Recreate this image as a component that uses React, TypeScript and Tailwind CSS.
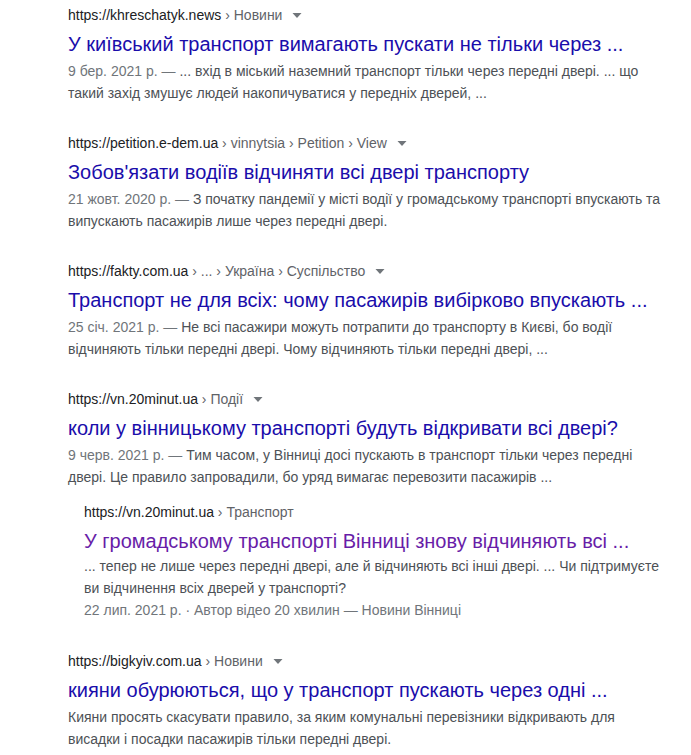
const font = { fontFamily: '"Liberation Sans", Arial, sans-serif' };

type Result = {
  site: string;
  crumbs: string;
  title: string;
  date?: string;
  snippet: string;
  arrow?: boolean;
  visited?: boolean;
  meta?: string;
};

const results: Result[] = [
  {
    site: "https://khreschatyk.news",
    crumbs: " › Новини",
    title: "У київський транспорт вимагають пускати не тільки через ...",
    date: "9 бер. 2021 р. — ",
    snippet:
      "... вхід в міський наземний транспорт тільки через передні двері. ... що такий захід змушує людей накопичуватися у передніх дверей, ...",
    arrow: true,
  },
  {
    site: "https://petition.e-dem.ua",
    crumbs: " › vinnytsia › Petition › View",
    title: "Зобов'язати водіїв відчиняти всі двері транспорту",
    date: "21 жовт. 2020 р. — ",
    snippet:
      "З початку пандемії у місті водії у громадському транспорті впускають та випускають пасажирів лише через передні двері.",
    arrow: true,
  },
  {
    site: "https://fakty.com.ua",
    crumbs: " › ... › Україна › Суспільство",
    title: "Транспорт не для всіх: чому пасажирів вибірково впускають ...",
    date: "25 січ. 2021 р. — ",
    snippet:
      "Не всі пасажири можуть потрапити до транспорту в Києві, бо водії відчиняють тільки передні двері. Чому відчиняють тільки передні двері, ...",
    arrow: true,
  },
  {
    site: "https://vn.20minut.ua",
    crumbs: " › Події",
    title: "коли у вінницькому транспорті будуть відкривати всі двері?",
    date: "9 черв. 2021 р. — ",
    snippet:
      "Тим часом, у Вінниці досі пускають в транспорт тільки через передні двері. Це правило запровадили, бо уряд вимагає перевозити пасажирів ...",
    arrow: true,
  },
];

function Arrow() {
  return (
    <svg width="10" height="5" viewBox="0 0 10 5" className="ml-[10px] mt-[1px]">
      <path d="M0.5 0h9L5 5z" fill="#70757a" />
    </svg>
  );
}

function Item({ r, nested }: { r: Result; nested?: boolean }) {
  return (
    <div className={nested ? "pl-4" : ""}>
      <div className="flex h-5 items-center text-[14px] leading-5">
        <span className="text-[#202124]">{r.site}</span>
        <span className="whitespace-pre text-[#5f6368]">{r.crumbs}</span>
        {r.arrow && <Arrow />}
      </div>
      <div
        className={
          "mt-[6px] text-[20px] leading-[26px] " +
          (r.visited ? "text-[#681da8]" : "text-[#1a0dab]")
        }
      >
        {r.title}
      </div>
      <div
        className={
          (nested ? "mt-[1px] " : "mt-[3px] ") +
          "text-[14px] leading-[22px] text-[#4d5156]"
        }
      >
        {r.date && <span className="text-[#70757a]">{r.date}</span>}
        {r.snippet}
      </div>
      {r.meta && (
        <div className="text-[14px] leading-[22px] text-[#70757a]">{r.meta}</div>
      )}
    </div>
  );
}

export default function App() {
  return (
    <div className="min-h-screen bg-white" style={font}>
      <div className="w-[600px] ml-[68px] pt-[5px]">
        <div className="flex flex-col gap-[29px]">
          {results.map((r) => (
            <Item key={r.title} r={r} />
          ))}
        </div>
        <div className="mt-[14px]">
          <Item
            nested
            r={{
              site: "https://vn.20minut.ua",
              crumbs: " › Транспорт",
              title: "У громадському транспорті Вінниці знову відчиняють всі ...",
              snippet:
                "... тепер не лише через передні двері, але й відчиняють всі інші двері. ... Чи підтримуєте ви відчинення всіх дверей у транспорті?",
              visited: true,
              meta: "22 лип. 2021 р. · Автор відео 20 хвилин — Новини Вінниці",
            }}
          />
        </div>
        <div className="mt-[30px]">
          <Item
            r={{
              site: "https://bigkyiv.com.ua",
              crumbs: " › Новини",
              title: "кияни обурюються, що у транспорт пускають через одні ...",
              snippet:
                "Кияни просять скасувати правило, за яким комунальні перевізники відкривають для висадки і посадки пасажирів тільки передні двері.",
              arrow: true,
            }}
          />
        </div>
      </div>
    </div>
  );
}
